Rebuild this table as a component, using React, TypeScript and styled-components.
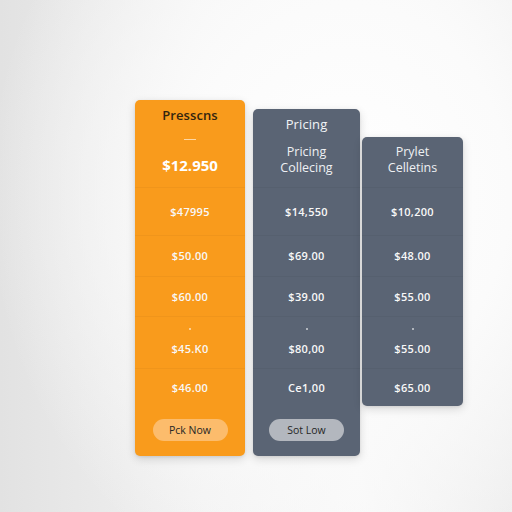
import styled, { createGlobalStyle } from "styled-components";

const GlobalStyle = createGlobalStyle`
  html, body {
    margin: 0;
    padding: 0;
  }
  body {
    width: 512px;
    height: 512px;
    overflow: hidden;
    font-family: "Open Sans", "Liberation Sans", sans-serif;
    background:
      radial-gradient(ellipse 360px 420px at 68% 38%, #ffffff 0%, #fbfbfb 45%, rgba(240,240,240,0) 100%),
      linear-gradient(90deg, #e2e2e2 0%, #f2f2f2 40%, #f8f8f8 70%, #ececec 100%);
  }
`;

const Page = styled.div`
  display: flex;
  align-items: flex-start;
  padding: 100px 0 0 135px;
`;

type Variant = "orange" | "slate";

type CardProps = {
  $variant: Variant;
  $width: number;
  $top: number;
  $gap: number;
};

const Card = styled.div<CardProps>`
  width: ${({ $width }) => $width}px;
  margin-top: ${({ $top }) => $top}px;
  margin-left: ${({ $gap }) => $gap}px;
  display: flex;
  flex-direction: column;
  border-radius: 5px;
  background: ${({ $variant }) => ($variant === "orange" ? "#f99b1c" : "#5a6474")};
  box-shadow: 0 3px 10px rgba(0, 0, 0, 0.14), 0 1px 3px rgba(0, 0, 0, 0.08);
  color: #ffffff;
  overflow: hidden;
`;

const Header = styled.div<{ $height: number }>`
  height: ${({ $height }) => $height}px;
  display: flex;
  flex-direction: column;
  align-items: center;
  box-sizing: border-box;
  border-bottom: 1px solid rgba(0, 0, 0, 0.035);
`;

const Title = styled.div<{ $dark?: boolean; $pad: number }>`
  padding-top: ${({ $pad }) => $pad}px;
  font-size: 13px;
  line-height: 18px;
  font-weight: ${({ $dark }) => ($dark ? 600 : 500)};
  letter-spacing: 0.1px;
  color: ${({ $dark }) => ($dark ? "#33250f" : "#f2f4f7")};
`;

const SubTitle = styled.div<{ $pad: number }>`
  padding-top: ${({ $pad }) => $pad}px;
  font-size: 12.5px;
  line-height: 16px;
  text-align: center;
  color: #eef0f3;
`;

const Dash = styled.div<{ $pad: number }>`
  margin-top: ${({ $pad }) => $pad}px;
  width: 12px;
  height: 1px;
  background: rgba(255, 255, 255, 0.6);
`;

const BigPrice = styled.div`
  padding-top: 15px;
  font-size: 15px;
  line-height: 20px;
  font-weight: 700;
  color: #ffffff;
`;

const Row = styled.div<{ $height: number; $last?: boolean }>`
  height: ${({ $height }) => $height}px;
  display: flex;
  flex-direction: column;
  align-items: center;
  justify-content: center;
  box-sizing: border-box;
  border-bottom: ${({ $last }) => ($last ? "none" : "1px solid rgba(0, 0, 0, 0.035)")};
`;

const Price = styled.div`
  font-size: 11px;
  line-height: 16px;
  font-weight: 600;
  letter-spacing: 0.3px;
  color: #f8f8f8;
`;

const Dot = styled.div`
  width: 2px;
  height: 2px;
  border-radius: 50%;
  background: rgba(255, 255, 255, 0.7);
  margin-bottom: 11px;
`;

const Footer = styled.div`
  height: 50px;
  display: flex;
  justify-content: center;
  padding-top: 13px;
  box-sizing: border-box;
`;

const Button = styled.button<{ $variant: Variant }>`
  width: 75px;
  height: 22px;
  border: none;
  border-radius: 11px;
  padding: 0;
  font-family: "Open Sans", "Liberation Sans", sans-serif;
  font-size: 10.5px;
  color: #262626;
  background: ${({ $variant }) => ($variant === "orange" ? "#fcbc6c" : "#b3b7be")};
`;

const rowHeights = [48, 41, 40, 52, 37];

type Column = {
  variant: Variant;
  width: number;
  top: number;
  gap: number;
  headerHeight: number;
  header: JSX.Element;
  prices: string[];
  button?: string;
};

const columns: Column[] = [
  {
    variant: "orange",
    width: 110,
    top: 0,
    gap: 0,
    headerHeight: 88,
    header: (
      <>
        <Title $dark $pad={6}>Presscns</Title>
        <Dash $pad={15} />
        <BigPrice>$12.950</BigPrice>
      </>
    ),
    prices: ["$47995", "$50.00", "$60.00", "$45.K0", "$46.00"],
    button: "Pck Now",
  },
  {
    variant: "slate",
    width: 107,
    top: 9,
    gap: 8,
    headerHeight: 79,
    header: (
      <>
        <Title $pad={6}>Pricing</Title>
        <SubTitle $pad={11}>
          Pricing
          <br />
          Collecing
        </SubTitle>
      </>
    ),
    prices: ["$14,550", "$69.00", "$39.00", "$80,00", "Ce1,00"],
    button: "Sot Low",
  },
  {
    variant: "slate",
    width: 101,
    top: 37,
    gap: 2,
    headerHeight: 51,
    header: (
      <>
        <SubTitle $pad={7}>
          Prylet
          <br />
          Celletins
        </SubTitle>
        <Dash $pad={11} />
      </>
    ),
    prices: ["$10,200", "$48.00", "$55.00", "$55.00", "$65.00"],
  },
];

export default function App() {
  return (
    <>
      <GlobalStyle />
      <Page>
        {columns.map((col, ci) => (
          <Card key={ci} $variant={col.variant} $width={col.width} $top={col.top} $gap={col.gap}>
            <Header $height={col.headerHeight}>{col.header}</Header>
            {col.prices.map((p, i) => (
              <Row key={i} $height={rowHeights[i]} $last={i === col.prices.length - 1}>
                {i === 3 && <Dot />}
                <Price>{p}</Price>
              </Row>
            ))}
            {col.button && (
              <Footer>
                <Button $variant={col.variant}>{col.button}</Button>
              </Footer>
            )}
          </Card>
        ))}
      </Page>
    </>
  );
}
